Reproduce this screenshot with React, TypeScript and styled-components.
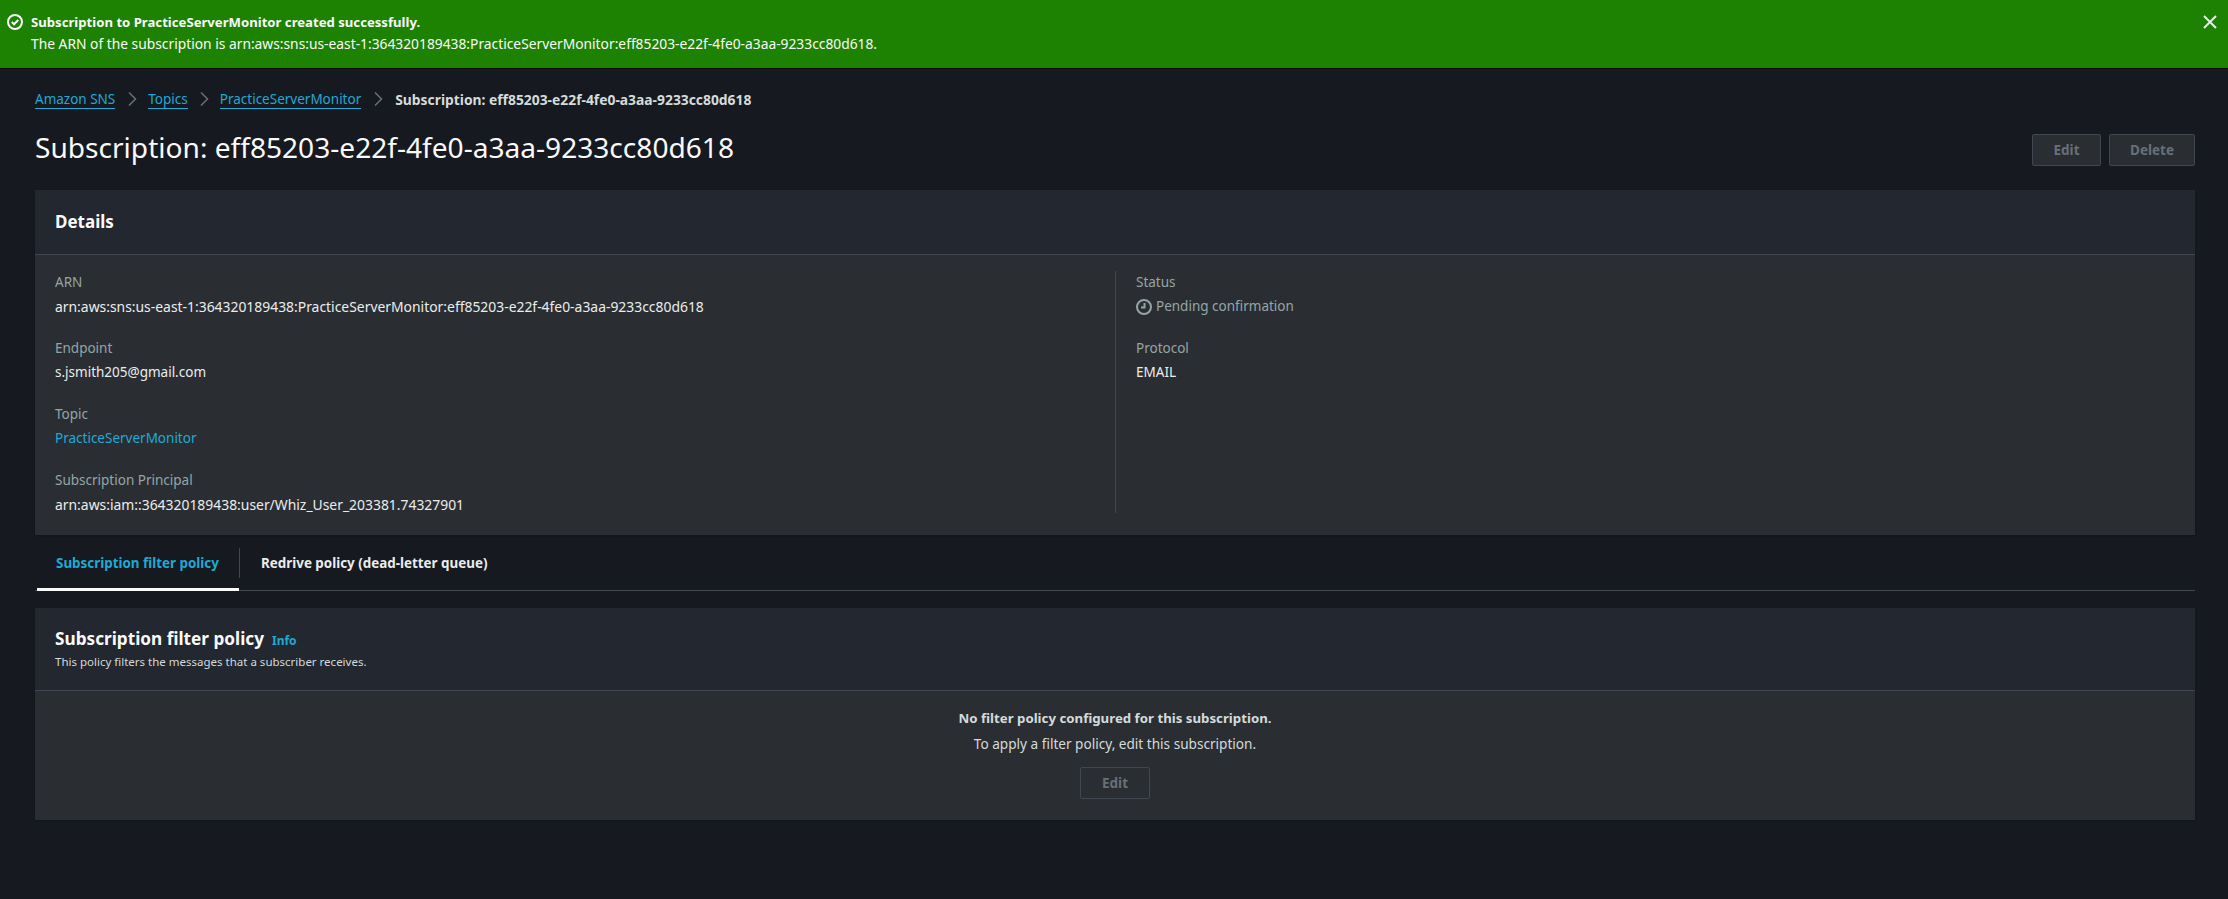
import React from "react";
import styled, { createGlobalStyle } from "styled-components";

const Global = createGlobalStyle`
  html, body { margin: 0; padding: 0; background: #16191f; }
  body { font-family: "Noto Sans", "Open Sans", Arial, sans-serif; font-size: 14px; color: #d5dbdb; }
  #root { min-height: 899px; }
`;

const Page = styled.div`
  width: 2228px;
  height: 899px;
  overflow: hidden;
  background: #16191f;
`;

const Banner = styled.div`
  height: 69px;
  box-sizing: border-box;
  border-bottom: 1px solid #0b0d10;
  background: #1d8102;
  color: #fafafa;
  display: flex;
  padding: 12px 10px 0 7px;
  gap: 8px;
`;

const BannerBody = styled.div`
  flex: 1;
`;

const BannerTitle = styled.div`
  font-weight: 700;
  line-height: 20px;
  font-size: 13.15px;
`;

const BannerText = styled.div`
  margin-top: 2px;
  line-height: 20px;
  font-size: 13.8px;
`;

const IconSlot = styled.span`
  display: inline-flex;
  align-items: center;
  flex: none;
`;

const BannerIcon = styled(IconSlot)`
  height: 20px;
`;

const CloseBtn = styled.button`
  background: none;
  border: 0;
  padding: 0;
  height: 20px;
  display: flex;
  align-items: center;
  color: #eaeded;
`;

const Content = styled.main`
  padding: 19px 33px 0 35px;
`;

const Crumbs = styled.nav`
  display: flex;
  align-items: center;
  height: 22px;
  margin-bottom: 19px;
  font-size: 13.5px;
`;

const CrumbLink = styled.a`
  color: #1fa9d4;
  border-bottom: 1px solid #1fa9d4;
  line-height: 18px;
`;

const CrumbSep = styled.span`
  display: inline-flex;
  width: ${(p: { $w: number }) => p.$w}px;
  justify-content: center;
  color: #687078;
`;

const CrumbCurrent = styled.span`
  font-weight: 700;
  color: #d5dbdb;
  font-size: 13.85px;
`;

const TitleRow = styled.div`
  display: flex;
  justify-content: space-between;
  align-items: flex-start;
  height: 61px;
`;

const Title = styled.h1`
  margin: 0;
  font-size: 28.1px;
  font-weight: 400;
  line-height: 36px;
  color: #fafafa;
`;

const Actions = styled.div`
  display: flex;
  gap: 8px;
  padding-top: 5px;
`;

const DisabledButton = styled.button<{ $w: number; $flat?: boolean }>`
  width: ${(p) => p.$w}px;
  height: 32px;
  box-sizing: border-box;
  border: 1px solid #414750;
  border-radius: 2px;
  background: ${(p) => (p.$flat ? "transparent" : "#2a2e33")};
  color: #687078;
  font-family: inherit;
  font-size: 13.5px;
  font-weight: 700;
  padding: 0;
`;

const Card = styled.section`
  background: #2a2e33;
  box-shadow: 0 1px 1px 0 rgba(0, 28, 36, 0.3), 1px 1px 1px 0 rgba(0, 28, 36, 0.15);
`;

const CardHead = styled.header<{ $h: number }>`
  height: ${(p) => p.$h}px;
  box-sizing: border-box;
  background: #232730;
  border-bottom: 1px solid #414750;
  padding: 0 20px;
`;

const DetailsHeadTitle = styled.h2`
  margin: 0;
  font-size: 17px;
  font-weight: 700;
  line-height: 63px;
  color: #fafafa;
`;

const DetailsGrid = styled.div`
  display: grid;
  grid-template-columns: 1060px 1fr;
  padding: 16px 20px 22px;
`;

const Column = styled.div<{ $split?: boolean }>`
  display: flex;
  flex-direction: column;
  gap: 16px;
  ${(p) => (p.$split ? "border-left: 1px solid #414750; padding-left: 20px;" : "")}
`;

const Field = styled.div`
  height: 50px;
  &:nth-child(4) {
    height: 44px;
  }
`;

const Label = styled.div`
  color: #95a5a6;
  line-height: 23px;
  font-size: 13.5px;
`;

const Value = styled.div<{ $arn?: boolean }>`
  color: #eaeded;
  line-height: 25px;
  font-size: ${(p) => (p.$arn ? "13.9px" : "13.5px")};
`;

const ValueLink = styled.a`
  color: #1fa9d4;
`;

const StatusValue = styled.div`
  color: #95a5a6;
  line-height: 25px;
  font-size: 13.5px;
  display: flex;
  align-items: center;
  gap: 4px;
`;

const Tabs = styled.div`
  display: flex;
  height: 56px;
  box-sizing: border-box;
  border-bottom: 1px solid #414750;
  margin-bottom: 17px;
`;

const Tab = styled.div<{ $active?: boolean }>`
  height: 56px;
  box-sizing: border-box;
  margin-left: ${(p) => (p.$active ? "2px" : "0")};
  width: ${(p) => (p.$active ? "202px" : "auto")};
  padding: ${(p) => (p.$active ? "0 0 0 19px" : "0 0 0 21px")};
  display: flex;
  align-items: center;
  position: relative;
  font-size: 13.4px;
  font-weight: 700;
  color: ${(p) => (p.$active ? "#1fa9d4" : "#eaeded")};
  ${(p) => (p.$active ? "border-bottom: 3px solid #fafafa; padding-top: 3px;" : "border-left: 1px solid #414750; height: 30px; margin-top: 13px;")}
`;

const PolicyHeadRow = styled.div`
  display: flex;
  align-items: baseline;
  gap: 8px;
  padding-top: 18px;
`;

const PolicyTitle = styled.h2`
  margin: 0;
  font-size: 17.2px;
  font-weight: 700;
  line-height: 26px;
  color: #fafafa;
`;

const InfoLink = styled.a`
  color: #1fa9d4;
  font-size: 12px;
  font-weight: 700;
`;

const PolicyDesc = styled.div`
  font-size: 11.5px;
  line-height: 16px;
  color: #d5dbdb;
  margin-top: 2px;
`;

const EmptyState = styled.div`
  height: 129px;
  box-sizing: border-box;
  padding-top: 16px;
  display: flex;
  flex-direction: column;
  align-items: center;
`;

const EmptyTitle = styled.div`
  font-weight: 700;
  font-size: 13.25px;
  line-height: 22px;
  color: #d5dbdb;
`;

const EmptyText = styled.div`
  font-size: 13.6px;
  line-height: 22px;
  margin-top: 4px;
  margin-bottom: 12px;
  color: #d5dbdb;
`;

const SuccessIcon = () => (
  <svg width="16" height="16" viewBox="0 0 16 16" fill="none" stroke="#fafafa" strokeWidth="2">
    <circle cx="8" cy="8" r="7" />
    <path d="M4.8 8l2.3 2.3 4.2-4.4" />
  </svg>
);

const CloseIcon = () => (
  <svg width="16" height="16" viewBox="0 0 16 16" fill="none" stroke="currentColor" strokeWidth="2">
    <path d="M2 2l12 12M14 2L2 14" />
  </svg>
);

const Chevron = () => (
  <svg width="16" height="16" viewBox="0 0 16 16" fill="none" stroke="currentColor" strokeWidth="1.5">
    <path d="M5 1.5L11.5 8 5 14.5" />
  </svg>
);

const PendingIcon = () => (
  <svg width="16" height="16" viewBox="0 0 16 16" fill="none" stroke="#95a5a6" strokeWidth="2">
    <circle cx="8" cy="8" r="7" />
    <path d="M8.5 4v4.5H5" />
  </svg>
);

export default function App() {
  return (
    <Page>
      <Global />
      <Banner>
        <BannerIcon><SuccessIcon /></BannerIcon>
        <BannerBody>
          <BannerTitle>Subscription to PracticeServerMonitor created successfully.</BannerTitle>
          <BannerText>The ARN of the subscription is arn:aws:sns:us-east-1:364320189438:PracticeServerMonitor:eff85203-e22f-4fe0-a3aa-9233cc80d618.</BannerText>
        </BannerBody>
        <CloseBtn aria-label="Close"><CloseIcon /></CloseBtn>
      </Banner>
      <Content>
        <Crumbs>
          <CrumbLink>Amazon SNS</CrumbLink>
          <CrumbSep $w={33}><Chevron /></CrumbSep>
          <CrumbLink>Topics</CrumbLink>
          <CrumbSep $w={32}><Chevron /></CrumbSep>
          <CrumbLink>PracticeServerMonitor</CrumbLink>
          <CrumbSep $w={34}><Chevron /></CrumbSep>
          <CrumbCurrent>Subscription: eff85203-e22f-4fe0-a3aa-9233cc80d618</CrumbCurrent>
        </Crumbs>
        <TitleRow>
          <Title>Subscription: eff85203-e22f-4fe0-a3aa-9233cc80d618</Title>
          <Actions>
            <DisabledButton $w={69}>Edit</DisabledButton>
            <DisabledButton $w={86}>Delete</DisabledButton>
          </Actions>
        </TitleRow>
        <Card>
          <CardHead $h={65}>
            <DetailsHeadTitle>Details</DetailsHeadTitle>
          </CardHead>
          <DetailsGrid>
            <Column>
              <Field>
                <Label>ARN</Label>
                <Value $arn>arn:aws:sns:us-east-1:364320189438:PracticeServerMonitor:eff85203-e22f-4fe0-a3aa-9233cc80d618</Value>
              </Field>
              <Field>
                <Label>Endpoint</Label>
                <Value>s.jsmith205@gmail.com</Value>
              </Field>
              <Field>
                <Label>Topic</Label>
                <Value><ValueLink>PracticeServerMonitor</ValueLink></Value>
              </Field>
              <Field>
                <Label>Subscription Principal</Label>
                <Value $arn>arn:aws:iam::364320189438:user/Whiz_User_203381.74327901</Value>
              </Field>
            </Column>
            <Column $split>
              <Field>
                <Label>Status</Label>
                <StatusValue><IconSlot><PendingIcon /></IconSlot>Pending confirmation</StatusValue>
              </Field>
              <Field>
                <Label>Protocol</Label>
                <Value>EMAIL</Value>
              </Field>
            </Column>
          </DetailsGrid>
        </Card>
        <Tabs>
          <Tab $active>Subscription filter policy</Tab>
          <Tab>Redrive policy (dead-letter queue)</Tab>
        </Tabs>
        <Card>
          <CardHead $h={83}>
            <PolicyHeadRow>
              <PolicyTitle>Subscription filter policy</PolicyTitle>
              <InfoLink>Info</InfoLink>
            </PolicyHeadRow>
            <PolicyDesc>This policy filters the messages that a subscriber receives.</PolicyDesc>
          </CardHead>
          <EmptyState>
            <EmptyTitle>No filter policy configured for this subscription.</EmptyTitle>
            <EmptyText>To apply a filter policy, edit this subscription.</EmptyText>
            <DisabledButton $w={70} $flat>Edit</DisabledButton>
          </EmptyState>
        </Card>
      </Content>
    </Page>
  );
}
